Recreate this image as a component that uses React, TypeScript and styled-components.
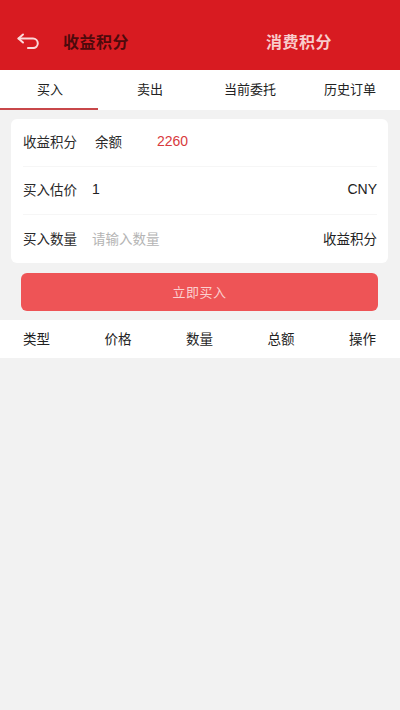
import React, { useState } from 'react';
import styled, { createGlobalStyle } from 'styled-components';

const GlobalStyle = createGlobalStyle`
  html, body {
    margin: 0;
    padding: 0;
    background: #f2f2f2;
    font-family: "Noto Sans CJK SC", "Noto Sans", "Liberation Sans", sans-serif;
  }
  * { box-sizing: border-box; }
`;

const Page = styled.div`
  width: 400px;
  min-height: 710px;
  background: #f2f2f2;
`;

const Header = styled.header`
  height: 70px;
  background: #d81b21;
  display: flex;
  align-items: center;
  padding: 12px 0 0 17px;
`;

const BackButton = styled.button`
  background: none;
  border: none;
  padding: 0;
  width: 24px;
  height: 18px;
  margin-right: 22px;
  display: flex;
  align-items: center;
  justify-content: center;
  color: #fbd9d9;
  cursor: pointer;
`;

const HeaderTab = styled.div<{ $active?: boolean; $width: number }>`
  width: ${p => p.$width}px;
  font-size: 16px;
  font-weight: 700;
  color: ${p => (p.$active ? '#4e0a0c' : '#f8cccc')};
  letter-spacing: 0.5px;
`;

const Tabs = styled.nav`
  height: 40px;
  background: #fff;
  display: grid;
  grid-template-columns: repeat(4, 1fr);
`;

const Tab = styled.div<{ $active?: boolean }>`
  position: relative;
  display: flex;
  align-items: center;
  justify-content: center;
  font-size: 13px;
  color: #222;
  padding-bottom: 3px;

  &::after {
    content: '';
    display: ${p => (p.$active ? 'block' : 'none')};
    position: absolute;
    left: 0;
    right: 2px;
    bottom: 0;
    height: 2px;
    background: #c8474a;
  }
`;

const Body = styled.div`
  padding: 9px 12px 0 11px;
`;

const Card = styled.div`
  background: #fff;
  border-radius: 6px;
  padding: 0 11px 0 12px;
`;

const Row = styled.div`
  height: 48px;
  display: flex;
  align-items: center;
  padding-bottom: 3px;
  font-size: 13.5px;
  color: #222;
  border-bottom: 1px solid #f6f6f6;

  &:last-child {
    border-bottom: none;
  }
`;

const Label = styled.span`
  width: 69px;
  flex-shrink: 0;
  color: #2a2a2a;
`;

const Sub = styled.span`
  width: 62px;
  margin-left: 3px;
  color: #2a2a2a;
`;

const Amount = styled.span`
  color: #d83a3d;
  font-family: "Liberation Sans", Arial, sans-serif;
  font-size: 14px;
`;

const Value = styled.span`
  font-family: "Liberation Sans", Arial, sans-serif;
  font-size: 14px;
  color: #222;
  flex: 1;
`;

const Input = styled.input`
  flex: 1;
  min-width: 0;
  border: none;
  outline: none;
  padding: 0;
  font-size: 13.5px;
  font-family: inherit;
  color: #222;
  background: transparent;

  &::placeholder {
    color: #b4b4b4;
  }
`;

const Unit = styled.span<{ $latin?: boolean }>`
  margin-left: auto;
  font-size: ${p => (p.$latin ? '14px' : '13.5px')};
  font-family: ${p => (p.$latin ? '"Liberation Sans", Arial, sans-serif' : 'inherit')};
  color: #222;
`;

const BuyButton = styled.button`
  display: block;
  width: 357px;
  height: 38px;
  margin: 10px 0 0 21px;
  padding: 0 0 2px;
  border: none;
  border-radius: 6px;
  background: #ee5456;
  color: #fbd0d0;
  font-size: 13px;
  font-family: inherit;
  letter-spacing: 0.5px;
  cursor: pointer;
`;

const TableHead = styled.div`
  margin-top: 9px;
  height: 38px;
  background: #fff;
  display: flex;
  align-items: center;
  justify-content: space-between;
  padding: 0 24px 2px 23px;
  font-size: 13.5px;
  color: #222;
`;

const BackIcon: React.FC = () => (
  <svg width="24" height="16" viewBox="0 0 24 16" fill="none" stroke="currentColor"
    strokeWidth="2" strokeLinecap="round" strokeLinejoin="round">
    <path d="M6 1.5 L1.5 5.5 L6 9.5" />
    <path d="M1.5 5.5 H16 a4.8 4.8 0 0 1 0 9.6 H11" />
  </svg>
);

const App: React.FC = () => {
  const [qty, setQty] = useState('');
  const tabs = ['买入', '卖出', '当前委托', '历史订单'];
  const cols = ['类型', '价格', '数量', '总额', '操作'];

  return (
    <Page>
      <GlobalStyle />
      <Header>
        <BackButton aria-label="back">
          <BackIcon />
        </BackButton>
        <HeaderTab $active $width={203}>收益积分</HeaderTab>
        <HeaderTab $width={90}>消费积分</HeaderTab>
      </Header>

      <Tabs>
        {tabs.map((t, i) => (
          <Tab key={t} $active={i === 0}>{t}</Tab>
        ))}
      </Tabs>

      <Body>
        <Card>
          <Row>
            <Label>收益积分</Label>
            <Sub>余额</Sub>
            <Amount>2260</Amount>
          </Row>
          <Row>
            <Label>买入估价</Label>
            <Value>1</Value>
            <Unit $latin>CNY</Unit>
          </Row>
          <Row>
            <Label>买入数量</Label>
            <Input
              placeholder="请输入数量"
              value={qty}
              onChange={e => setQty(e.target.value)}
            />
            <Unit>收益积分</Unit>
          </Row>
        </Card>
      </Body>

      <BuyButton>立即买入</BuyButton>

      <TableHead>
        {cols.map(c => (
          <span key={c}>{c}</span>
        ))}
      </TableHead>
    </Page>
  );
};

export default App;
